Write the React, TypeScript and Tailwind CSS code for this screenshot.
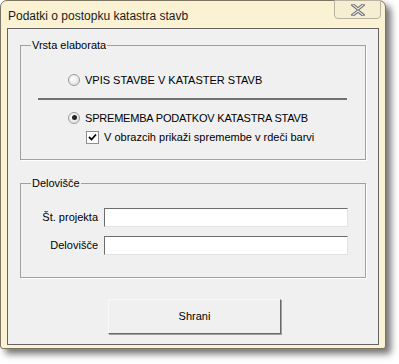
export default function App() {
    return (
        <div className="w-[399px] h-[364px] bg-white" style={{ fontFamily: '"Liberation Sans", Arial, sans-serif' }}>
            <div className="w-[386px] h-[349px] rounded-t-[7px] rounded-b-[3px] border border-[#7c7562] bg-[#fbf2d4] shadow-[5px_5px_7px_rgba(0,0,0,0.55)] flex flex-col">
                <div className="h-[27px] flex items-start justify-between pl-[7px] pr-[4px]">
                    <span className="mt-[6px] text-[12px] text-[#1b1b1b]">Podatki o postopku katastra stavb</span>
                    <div className="w-[47px] h-[19px] -mt-px rounded-b-[4px] border border-[#b9b3a0] bg-[#f6eed3] flex items-center justify-center">
                        <svg width="14" height="12" viewBox="0 0 14 12">
                            <path d="M2 1 L7 5 L12 1 M2 11 L7 7 L12 11" stroke="#6b6b6b" strokeWidth="3.2" fill="none" strokeLinecap="square" />
                            <path d="M2 1 L7 5 L12 1 M2 11 L7 7 L12 11" stroke="#e8e8e8" strokeWidth="1.2" fill="none" strokeLinecap="square" />
                        </svg>
                    </div>
                </div>
                <div className="mx-[6px] h-[317px] border border-[#646464] bg-[#f0f0f0] text-[11px] text-black flex flex-col px-[12px] pt-[10px]">
                    <fieldset className="h-[121px] border border-[#a0a0a0] px-[10px] shadow-[1px_1px_0_#fff]">
                        <legend className="px-[1px] leading-[13px]">Vrsta elaborata</legend>
                        <div className="flex items-center gap-[5px] mt-[20px] ml-[37px]">
                            <Radio checked={false} />
                            <span>VPIS STAVBE V KATASTER STAVB</span>
                        </div>
                        <div className="mt-[9px] ml-[7px] w-[309px] h-[2px] bg-[#717171]"></div>
                        <div className="flex items-center gap-[5px] mt-[10px] ml-[37px]">
                            <Radio checked={true} />
                            <span className="tracking-[-0.2px]">SPREMEMBA PODATKOV KATASTRA STAVB</span>
                        </div>
                        <div className="flex items-center gap-[5px] mt-[3px] ml-[55px]">
                            <div className="w-[13px] h-[13px] border border-[#8e8f8f] bg-white flex items-center justify-center">
                                <svg width="9" height="9" viewBox="0 0 9 9">
                                    <path d="M1 4 L3.5 6.5 L8 1.5" stroke="#000" strokeWidth="1.8" fill="none" />
                                </svg>
                            </div>
                            <span>V obrazcih prikaži spremembe v rdeči barvi</span>
                        </div>
                    </fieldset>
                    <fieldset className="mt-[17px] h-[101px] border border-[#a0a0a0] px-[10px] shadow-[1px_1px_0_#fff]">
                        <legend className="px-[1px] leading-[13px]">Delovišče</legend>
                        <div className="mt-[18px] flex flex-col gap-[9px]">
                            <Field label="Št. projekta" />
                            <Field label="Delovišče" />
                        </div>
                    </fieldset>
                    <div className="mt-[21px] ml-[88px] w-[173px] h-[35px] border border-[#f8f8f8] border-r-[#696969] border-b-[#696969] shadow-[1px_1px_0_#a0a0a0] flex items-center justify-center">
                        Shrani
                    </div>
                </div>
            </div>
        </div>
    );
}

function Radio({ checked }: { checked: boolean }) {
    return (
        <div className="w-[12px] h-[12px] rounded-full border border-[#9a9a9a] bg-[radial-gradient(circle_at_40%_40%,#ffffff,#d8d8d8)] flex items-center justify-center">
            {checked && <div className="w-[5px] h-[5px] rounded-full bg-[#222]"></div>}
        </div>
    );
}

function Field({ label }: { label: string }) {
    return (
        <div className="flex items-center">
            <span className="w-[73px] text-right pr-[6px]">{label}</span>
            <div className="w-[244px] h-[19px] bg-white border border-[#6d6d6d] border-r-[#e3e3e3] border-b-[#e3e3e3]"></div>
        </div>
    );
}
